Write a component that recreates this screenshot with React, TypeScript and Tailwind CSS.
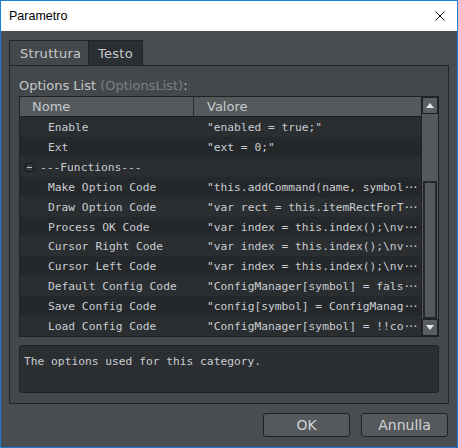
import React from 'react';

const rows: Array<{ name: string; value: string; cut?: boolean; group?: boolean }> = [
  { name: 'Enable', value: '"enabled = true;"' },
  { name: 'Ext', value: '"ext = 0;"' },
  { name: '---Functions---', value: '', group: true },
  { name: 'Make Option Code', value: '"this.addCommand(name, symbol', cut: true },
  { name: 'Draw Option Code', value: '"var rect = this.itemRectForT', cut: true },
  { name: 'Process OK Code', value: '"var index = this.index();\\nv', cut: true },
  { name: 'Cursor Right Code', value: '"var index = this.index();\\nv', cut: true },
  { name: 'Cursor Left Code', value: '"var index = this.index();\\nv', cut: true },
  { name: 'Default Config Code', value: '"ConfigManager[symbol] = fals', cut: true },
  { name: 'Save Config Code', value: '"config[symbol] = ConfigManag', cut: true },
  { name: 'Load Config Code', value: '"ConfigManager[symbol] = !!co', cut: true },
];

const mono = { fontFamily: '"DejaVu Sans Mono", monospace' };
const sans = { fontFamily: '"DejaVu Sans", "Open Sans", sans-serif' };

export default function App() {
  return (
    <div className="w-[458px] h-[448px] border border-[#1a7fd4] flex flex-col overflow-hidden">
      {/* Title bar */}
      <div className="h-[30px] bg-white flex items-center justify-between pl-[8px] pr-[12px] shrink-0">
        <span className="text-[12.5px] text-black" style={{ fontFamily: '"Liberation Sans", Arial, sans-serif' }}>
          Parametro
        </span>
        <svg width="10" height="10" viewBox="0 0 10 10">
          <path d="M0.5 0.5 L9.5 9.5 M9.5 0.5 L0.5 9.5" stroke="#111" strokeWidth="1" />
        </svg>
      </div>

      {/* Body */}
      <div className="flex-1 bg-[#4a4d50] px-[8px] pt-[9px] flex flex-col" style={sans}>
        {/* Tabs */}
        <div className="flex h-[25px]">
          <div className="w-[80px] bg-[#45484b] border border-b-0 border-[#222427] flex items-center pl-[10px] pt-[2px] text-[13px] tracking-[0.3px] text-[#c6c9cc]">
            Struttura
          </div>
          <div className="w-[54px] bg-[#2c2f32] border border-l-0 border-b-0 border-[#222427] flex items-center justify-center pt-[2px] text-[13px] tracking-[0.3px] text-[#c6c9cc] h-[25px]">
            Testo
          </div>
        </div>

        {/* Panel */}
        <div className="h-[339px] bg-[#45484b] border border-[#222427] px-[9px] flex flex-col">
          <div className="h-[30px] flex items-end pb-[1px] text-[13px] text-[#c6c9cc]">
            Options List&nbsp;<span className="text-[#7b7f83]">(OptionsList)</span>:
          </div>

          {/* Table */}
          <div className="h-[241px] border border-[#1f2124] flex bg-[#2b2e31]">
            <div className="flex-1 flex flex-col">
              <div className="h-[20px] bg-[#55595c] flex text-[13px] text-[#c6c9cc] border-b border-[#1f2124]">
                <div className="w-[174px] border-r border-[#2a2d30] pl-[12px] flex items-center">Nome</div>
                <div className="flex-1 pl-[13px] flex items-center">Valore</div>
              </div>
              {rows.map((r, i) => (
                <div
                  key={i}
                  className={`h-[20px] flex items-center pt-[3px] text-[11.25px] text-[#c9cdd1] ${i % 2 === 0 ? 'bg-[#2b2e31]' : 'bg-[#25282b]'}`}
                  style={mono}
                >
                  {r.group ? (
                    <div className="flex items-center pl-[5px]">
                      <div className="w-[9px] h-[9px] shrink-0 rounded-[2px] border border-[#141618] bg-[#33363a] flex items-center justify-center -mt-[2px]">
                        <div className="w-[5px] h-[1px] bg-[#b8bcc0]" />
                      </div>
                      <span className="ml-[6px]">{r.name}</span>
                    </div>
                  ) : (
                    <>
                      <div className="w-[174px] pl-[28px] whitespace-pre">{r.name}</div>
                      <div className="flex-1 pl-[13px] whitespace-pre overflow-hidden">
                        {r.value}
                        {r.cut && <span className="tracking-[-2.5px]">{'\u00b7\u00b7\u00b7'}</span>}
                      </div>
                    </>
                  )}
                </div>
              ))}
            </div>

            {/* Scrollbar */}
            <div className="w-[17px] bg-[#55595c] border-l border-[#1f2124] flex flex-col">
              <div className="h-[17px] border border-[#1f2124] bg-[#5a5e61] flex items-center justify-center">
                <svg width="8" height="5" viewBox="0 0 8 5">
                  <path d="M4 0 L8 5 L0 5 Z" fill="#e6e8ea" />
                </svg>
              </div>
              <div className="flex-1 flex flex-col pt-[67px]">
                <div className="flex-1 border-2 border-[#25282b] bg-[#55595c] mx-[1px]" />
              </div>
              <div className="h-[17px] border border-[#1f2124] bg-[#5a5e61] flex items-center justify-center">
                <svg width="8" height="5" viewBox="0 0 8 5">
                  <path d="M0 0 L8 0 L4 5 Z" fill="#e6e8ea" />
                </svg>
              </div>
            </div>
          </div>

          {/* Description */}
          <div
            className="mt-[8px] h-[48px] rounded-[3px] border border-[#1f2124] bg-[#2c2f32] px-[4px] pt-[8px] text-[11.25px] text-[#c9cdd1]"
            style={mono}
          >
            The options used for this category.
          </div>
        </div>

        {/* Buttons */}
        <div className="flex justify-end gap-[11px] mt-[9px] pr-[1px]">
          <div className="w-[87px] h-[24px] rounded-[3px] border border-[#1f2124] bg-[#55595c] flex items-center justify-center text-[14px] text-[#d0d3d6]">
            OK
          </div>
          <div className="w-[87px] h-[24px] rounded-[3px] border border-[#1f2124] bg-[#55595c] flex items-center justify-center text-[14px] text-[#d0d3d6]">
            Annulla
          </div>
        </div>
      </div>
    </div>
  );
}
